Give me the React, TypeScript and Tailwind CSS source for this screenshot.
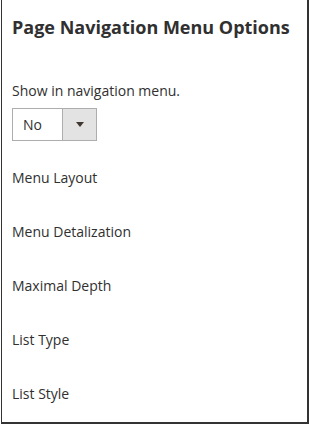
export default function App() {
  const fields = [
    "Menu Layout",
    "Menu Detalization",
    "Maximal Depth",
    "List Type",
    "List Style",
  ];

  return (
    <div
      className="ml-[1px] h-[424px] w-[308px] border-b-2 border-l border-r-2 border-[#333333] bg-white pl-[10px] pt-[15px] text-[#303030]"
      style={{ fontFamily: '"Open Sans", sans-serif' }}
    >
      <h2 className="text-[18px] font-bold leading-[24px]">
        Page Navigation Menu Options
      </h2>

      <label className="mt-[42px] block text-[14px] leading-[20px]">
        Show in navigation menu.
      </label>
      <div className="mt-[7px] flex h-[33px] w-[85px] border border-[#adadad] bg-white">
        <div className="flex flex-1 items-center pl-[10px] text-[14px] leading-[20px]">
          No
        </div>
        <div className="flex w-[34px] items-center justify-center border-l border-[#adadad] bg-[#e3e3e3]">
          <svg width="8" height="5" viewBox="0 0 8 5">
            <path d="M0 0h8L4 5z" fill="#41362f" />
          </svg>
        </div>
      </div>

      <div className="mt-[27px] flex flex-col gap-[34px]">
        {fields.map((f) => (
          <div key={f} className="text-[14px] leading-[20px]">
            {f}
          </div>
        ))}
      </div>
    </div>
  );
}
